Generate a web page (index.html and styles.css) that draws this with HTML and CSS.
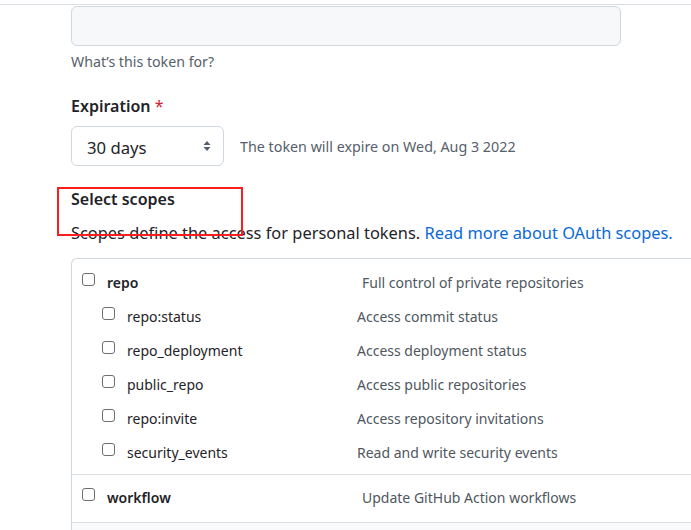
FILE: index.html
```html
<!DOCTYPE html>
<html>
<head>
<meta charset="utf-8">
<link rel="stylesheet" href="styles.css">
</head>
<body>
<div class="topbar"></div>
<div class="form">
  <div class="text-input"></div>
  <p class="note">What’s this token for?</p>

  <div class="label">Expiration <span class="req">*</span></div>
  <div class="expire-row">
    <div class="select">
      <span>30 days</span>
      <svg class="arrows" width="8" height="12" viewBox="0 0 8 12"><path d="M4 1 L7.5 5 H0.5 Z M4 11 L7.5 7 H0.5 Z" fill="#57606a"/></svg>
    </div>
    <span class="expire-note">The token will expire on Wed, Aug 3 2022</span>
  </div>

  <div class="heading-wrap">
    <div class="heading">Select scopes</div>
    <div class="annot"></div>
  </div>
  <p class="lead">Scopes define the access for personal tokens. <a class="link" href="#">Read more about OAuth scopes.</a></p>

  <div class="scopes">
    <div class="group group-first">
      <div class="row row-main row-first">
        <span class="check"></span><span class="name name-main">repo</span>
        <span class="desc">Full control of private repositories</span>
      </div>
      <div class="row row-sub">
        <span class="check"></span><span class="name name-sub">repo:status</span>
        <span class="desc">Access commit status</span>
      </div>
      <div class="row row-sub">
        <span class="check"></span><span class="name name-sub">repo_deployment</span>
        <span class="desc">Access deployment status</span>
      </div>
      <div class="row row-sub">
        <span class="check"></span><span class="name name-sub">public_repo</span>
        <span class="desc">Access public repositories</span>
      </div>
      <div class="row row-sub">
        <span class="check"></span><span class="name name-sub">repo:invite</span>
        <span class="desc">Access repository invitations</span>
      </div>
      <div class="row row-sub">
        <span class="check"></span><span class="name name-sub">security_events</span>
        <span class="desc">Read and write security events</span>
      </div>
    </div>
    <div class="group group-second">
      <div class="row row-main">
        <span class="check"></span><span class="name name-main">workflow</span>
        <span class="desc">Update GitHub Action workflows</span>
      </div>
    </div>
    <div class="group group-third"></div>
  </div>
</div>
</body>
</html>
```
FILE: styles.css
```css
html, body {
  margin: 0;
  padding: 0;
  overflow: hidden;
  background: #ffffff;
}
body {
  font-family: "Noto Sans", "Open Sans", sans-serif;
  color: #1f2328;
}
.topbar {
  height: 4px;
  border-bottom: 1px solid #d8dee4;
}
.form {
  padding-left: 71px;
  padding-top: 1px;
}
.text-input {
  width: 550px;
  height: 40px;
  box-sizing: border-box;
  background: #f6f8fa;
  border: 1px solid #d0d7de;
  border-radius: 6px;
}
.note {
  margin: 6px 0 0;
  font-size: 14.2px;
  line-height: 20px;
  color: #57606a;
}
.label {
  margin-top: 22px;
  font-size: 16px;
  line-height: 24px;
  font-weight: 600;
}
.req {
  color: #cf222e;
  font-weight: 400;
}
.expire-row {
  margin-top: 8px;
  display: flex;
  align-items: center;
  gap: 16px;
}
.select {
  width: 153px;
  height: 40px;
  box-sizing: border-box;
  border: 1px solid #d0d7de;
  border-radius: 6px;
  display: flex;
  align-items: center;
  justify-content: space-between;
  padding: 0 12px 0 15px;
  font-size: 16.7px;
}
.select span {
  position: relative;
  top: 1px;
}
.expire-note {
  font-size: 14.3px;
  color: #57606a;
}
.heading-wrap {
  position: relative;
  margin-top: 21px;
}
.heading {
  font-size: 16px;
  line-height: 24px;
  font-weight: 600;
}
.annot {
  position: absolute;
  left: -14px;
  top: 0;
  width: 186px;
  height: 49px;
  box-sizing: border-box;
  border: 2px solid #fa1e1e;
  pointer-events: none;
  z-index: 2;
}
.lead {
  margin: 10px 0 0;
  font-size: 16.4px;
  line-height: 24px;
}
.link {
  color: #0969da;
  text-decoration: none;
}
.scopes {
  margin-top: 13px;
  width: 660px;
  border: 1px solid #d0d7de;
  border-right: none;
  border-radius: 6px 0 0 0;
}
.group {
  border-bottom: 1px solid #d8dee4;
}
.group-first {
  padding: 7px 0 5px;
}
.group-second {
  padding: 5px 0 8px;
}
.group-third {
  height: 20px;
  background: #f9fafb;
  border-bottom: none;
}
.row {
  display: flex;
  align-items: center;
  height: 34px;
  font-size: 14px;
}
.row-first {
  height: 33px;
}
.row-main {
  padding-left: 10px;
}
.row-sub {
  padding-left: 30px;
}
.check {
  width: 13px;
  height: 13px;
  box-sizing: border-box;
  border: 1px solid #6e6e6e;
  border-radius: 3px;
  background: #fff;
  margin-right: 12px;
  flex: none;
  position: relative;
  top: -3px;
}
.name {
  flex: none;
}
.name-main {
  width: 255px;
  font-weight: 600;
}
.name-sub {
  width: 230px;
}
.desc {
  color: #4f575e;
}
```
